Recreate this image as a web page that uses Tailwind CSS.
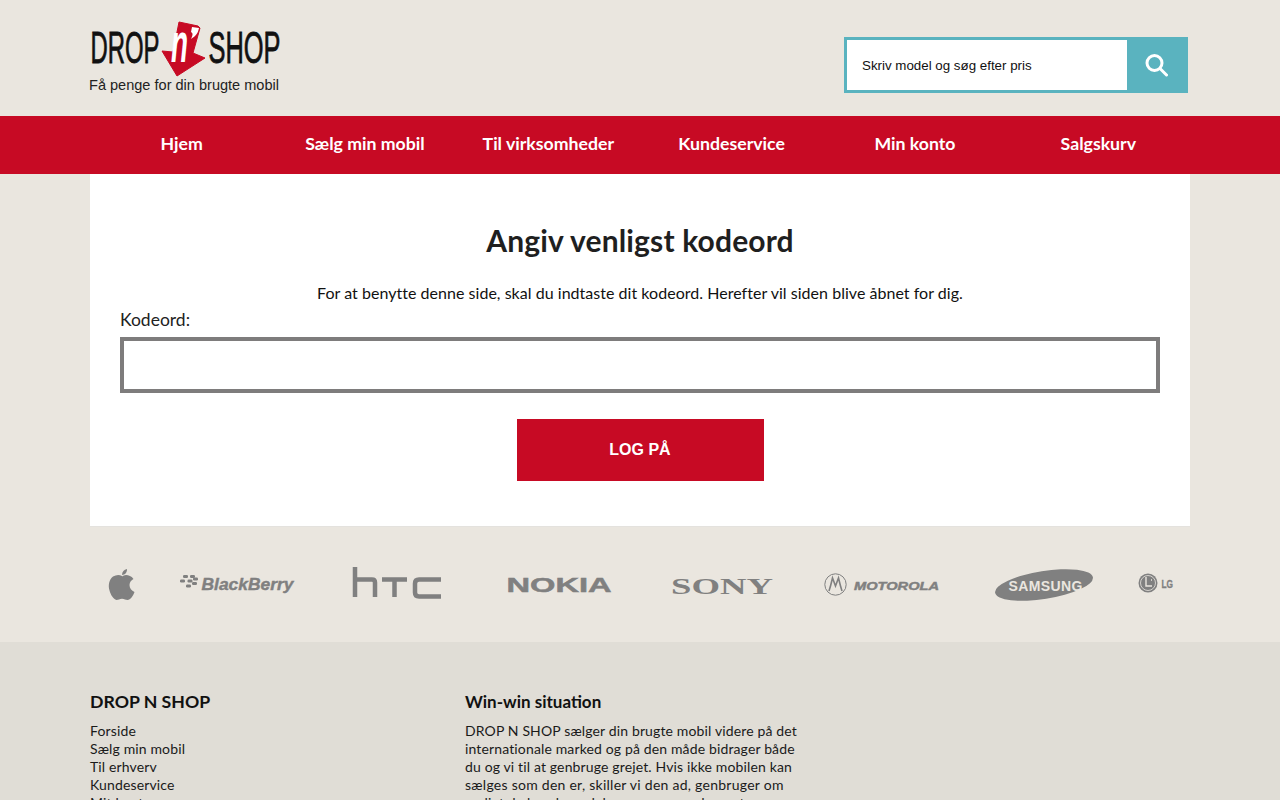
<!DOCTYPE html>
<html lang="da">
<head>
<meta charset="utf-8">
<title>Drop N Shop</title>
<script src="https://cdn.jsdelivr.net/npm/@tailwindcss/browser@4"></script>
</head>
<body class="bg-[#eae6df] font-['Lato','Open_Sans',sans-serif] text-[#1a1a1a]">
<div class="h-screen overflow-hidden">
  <header class="h-[116px] w-[1100px] mx-auto flex items-start justify-between">
    <svg class="mt-[20px] -ml-[2px]" width="200" height="76" viewBox="0 0 200 76" xmlns="http://www.w3.org/2000/svg">
      <g fill="#111" stroke="#111" stroke-width=".8">
        <text transform="translate(2.500 42.500) scale(.6 1)" font-family="Liberation Sans" font-size="44" textLength="115" lengthAdjust="spacingAndGlyphs">DROP</text>
        <text transform="translate(120.500 42.500) scale(.6 1)" font-family="Liberation Sans" font-size="44" textLength="120" lengthAdjust="spacingAndGlyphs">SHOP</text>
      </g>
      <polygon points="91,2 110,6 112,8 105,33 117,38 89,56 74,31 85,32" fill="#c70a24" stroke="#c70a24" stroke-linejoin="round"/>
      <text transform="translate(83 42) scale(.5 1)" font-family="Liberation Sans" font-size="56" font-weight="700" font-style="italic" fill="#fff" textLength="34" lengthAdjust="spacingAndGlyphs">n</text>
      <path d="M104 7 L111 8 C110 13 108 16 103 19 C105 15 105 13 103 12 Z" fill="#fff"/>
      <text x="1" y="70" font-family="Liberation Sans" font-size="15" fill="#222" textLength="190" lengthAdjust="spacingAndGlyphs">Få penge for din brugte mobil</text>
    </svg>
    <form class="mt-[37px] mr-[2px] flex w-[344px] h-[56px] border-[3px] border-[#5ab3bf] bg-[#5ab3bf]">
      <div class="w-[280px] bg-white pl-[15px] pt-[1px] flex items-center font-['Liberation_Sans',sans-serif] text-[13.33px] text-[#111]">Skriv model og søg efter pris</div>
      <div class="flex-1 flex items-center justify-center">
        <svg width="24" height="24" viewBox="0 0 24 24" fill="none" stroke="#fff" stroke-width="3" stroke-linecap="round"><circle cx="10.500" cy="10" r="7.500"/><path d="M16.500 16l6 6"/></svg>
      </div>
    </form>
  </header>

  <nav class="bg-[#c70a24] h-[58px]">
    <ul class="w-[1100px] mx-auto grid grid-cols-6 h-full pb-[2px] text-white text-[17.7px] font-bold">
      <li class="flex items-center justify-center">Hjem</li>
      <li class="flex items-center justify-center">Sælg min mobil</li>
      <li class="flex items-center justify-center">Til virksomheder</li>
      <li class="flex items-center justify-center">Kundeservice</li>
      <li class="flex items-center justify-center">Min konto</li>
      <li class="flex items-center justify-center">Salgskurv</li>
    </ul>
  </nav>

  <main class="w-[1100px] h-[353px] mx-auto bg-white px-[30px] pt-[48px] border-b border-[#e4e2de]">
    <h1 class="text-center text-[30px] tracking-[0.15px] font-bold leading-[36px] text-[#1f1f1f]">Angiv venligst kodeord</h1>
    <p class="text-center text-[16px] tracking-[0.03px] leading-[24px] mt-[23px] text-[#111]">For at benytte denne side, skal du indtaste dit kodeord. Herefter vil siden blive åbnet for dig.</p>
    <label class="block text-[17.5px] leading-[24px] text-[#222] mt-[3px]">Kodeord:</label>
    <div class="h-[56px] mt-[5px] border-[4px] border-[#7e7c7c] bg-white"></div>
    <div class="mt-[26px] flex justify-center">
      <button class="w-[247px] h-[62px] bg-[#c70a24] text-white font-['Liberation_Sans',sans-serif] font-bold text-[16px]">LOG PÅ</button>
    </div>
  </main>

  <div class="w-[1100px] h-[115px] mx-auto">
    <svg width="1100" height="115" viewBox="90 527 1100 115" xmlns="http://www.w3.org/2000/svg" fill="#808080">
      <!-- apple -->
      <path d="M122 576c-3-1.500-6-1-9 0.500-4 3-5 9-3.500 14 1 4 4 9 7 9.500 2 0 3-1.300 5.500-1.300s3.500 1.300 5.500 1.300c3-0.300 5.500-4 7-8-3-1.300-5-4-5-7 0-3 2-5 4-6-2-3-5-4-7.500-4-1.500 0-3 1-4 1.500z"/>
      <path d="M122 575c0-3 2-5.500 5-6 0.300 3-2 6-5 6z"/>
      <!-- blackberry -->
      <g>
        <rect x="183" y="575" width="5" height="3" rx="1.200"/><rect x="190" y="575" width="5" height="3" rx="1.200"/>
        <rect x="180" y="579.500" width="5" height="3" rx="1.200"/><rect x="187.500" y="579.500" width="5" height="3" rx="1.200"/><rect x="193" y="577.500" width="5" height="3" rx="1.200"/>
        <rect x="186" y="584.500" width="5" height="3" rx="1.200"/><rect x="192" y="582" width="5" height="3" rx="1.200"/>
      </g>
      <text x="201.500" y="590" font-family="Liberation Sans" font-weight="700" font-style="italic" font-size="17" stroke="#808080" stroke-width=".4" textLength="92" lengthAdjust="spacingAndGlyphs">BlackBerry</text>
      <!-- htc -->
      <g fill="none" stroke="#808080" stroke-width="4.500">
        <path d="M355 567v30M355 581.500q0-2 3-2h14q3 0 3 3v14.500"/>
        <path d="M382 579.500h25M394.500 579.500v17.500"/>
        <path d="M441 579.500h-22q-4 0-4 4v9q0 4 4 4h22"/>
      </g>
      <!-- nokia -->
      <text x="506.500" y="592" font-family="Liberation Sans" font-weight="700" font-size="21" stroke="#808080" stroke-width=".5" textLength="105" lengthAdjust="spacingAndGlyphs">NOKIA</text>
      <!-- sony -->
      <text x="671" y="594" font-family="Liberation Serif" font-weight="700" font-size="23" textLength="102" lengthAdjust="spacingAndGlyphs">SONY</text>
      <!-- motorola -->
      <circle cx="835.500" cy="584.500" r="10.700" fill="none" stroke="#808080" stroke-width="1"/>
      <path d="M829 591C831 585 832 580 832.500 578L835.500 586L838.500 578C839 580 840 585 842 591" fill="none" stroke="#808080" stroke-width="1.600"/>
      <text x="854" y="589.500" font-family="Liberation Sans" font-weight="700" font-style="italic" font-size="11.500" stroke="#808080" stroke-width=".45" textLength="85" lengthAdjust="spacingAndGlyphs">MOTOROLA</text>
      <!-- samsung -->
      <ellipse cx="1044" cy="585" rx="49.500" ry="14" transform="rotate(-9 1044 585)"/>
      <text x="1008.500" y="590.500" font-family="Liberation Sans" font-weight="700" font-size="14" fill="#eae6df" textLength="74" lengthAdjust="spacing">SAMSUNG</text>
      <!-- lg -->
      <circle cx="1148" cy="583" r="9.500"/>
      <circle cx="1148" cy="583" r="7.500" fill="none" stroke="#eae6df" stroke-width=".8"/>
      <path d="M1146 577v9h6M1151 580h1" fill="none" stroke="#eae6df" stroke-width="1.400"/>
      <text x="1161.500" y="587.500" font-family="Liberation Sans" font-weight="700" font-size="10" stroke="#808080" stroke-width=".3" textLength="11.500" lengthAdjust="spacingAndGlyphs">LG</text>
    </svg>
  </div>

  <footer class="bg-[#e0ddd6] h-[300px]">
    <div class="w-[1100px] mx-auto pt-[49px] flex text-[14px] leading-[18px] tracking-[0.14px] text-[#1a1a1a]">
      <section class="w-[375px]">
        <h3 class="text-[17.7px] tracking-normal leading-[22px] font-bold text-[#111] mb-[9px]">DROP N SHOP</h3>
        <ul>
          <li>Forside</li>
          <li>Sælg min mobil</li>
          <li>Til erhverv</li>
          <li>Kundeservice</li>
          <li>Mit konto</li>
        </ul>
      </section>
      <section class="w-[340px]">
        <h3 class="text-[17px] tracking-normal leading-[22px] font-bold text-[#111] mb-[9px]">Win-win situation</h3>
        <p>DROP N SHOP sælger din brugte mobil videre på det<br>internationale marked og på den måde bidrager både<br>du og vi til at genbruge grejet. Hvis ikke mobilen kan<br><span class="tracking-[0.26px]">sælges som den er, skiller vi den ad, genbruger om</span><br>muligt de brugbare dele og genanvender resten.</p>
      </section>
    </div>
  </footer>
</div>
</body>
</html>
